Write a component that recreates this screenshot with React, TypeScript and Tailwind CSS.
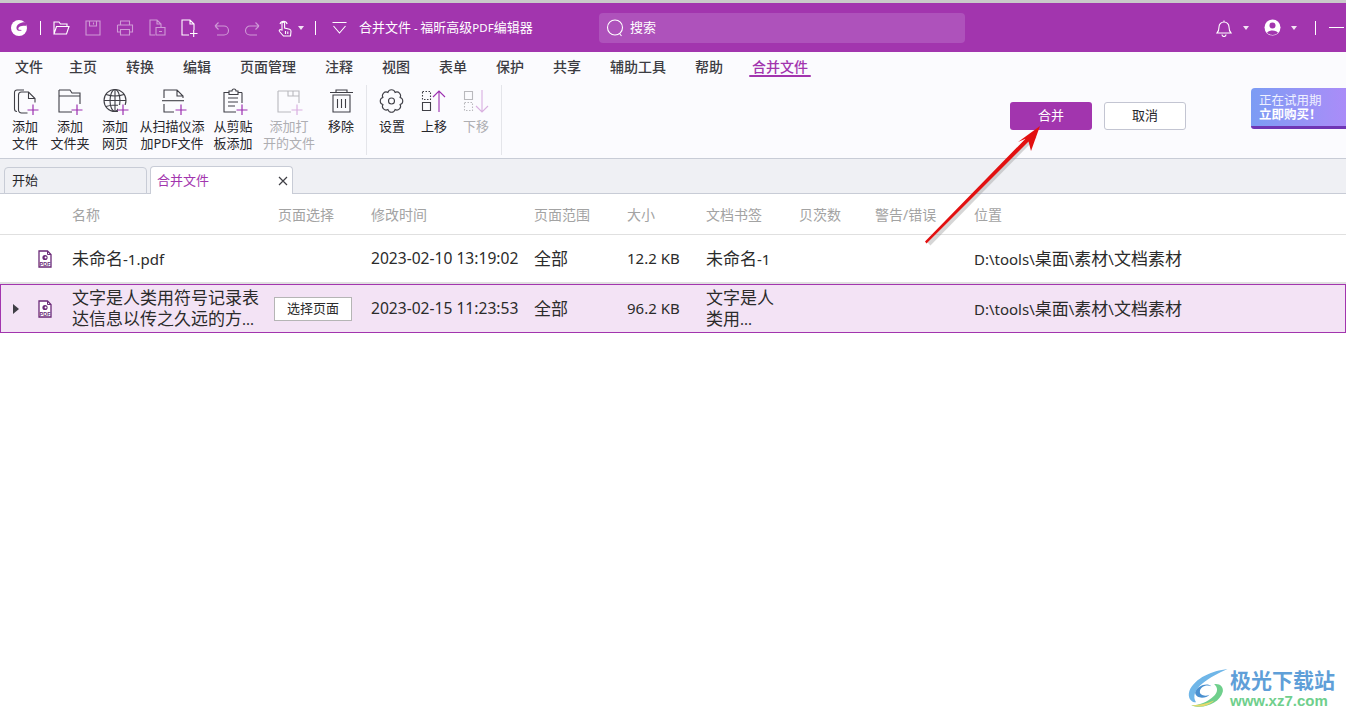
import type { ReactNode } from 'react';

const FONT = 'font-["Noto_Sans","Noto_Sans_CJK_SC",sans-serif]';

function Plus({ x, y, color = '#9c2fb0' }: { x: number; y: number; color?: string }) {
  return <path d={`M${x - 5.5} ${y}h11M${x} ${y - 5.5}v11`} stroke={color} strokeWidth="1.2" fill="none" />;
}

function RibbonSvg({ children }: { children: ReactNode }) {
  return (
    <svg width="32" height="30" viewBox="0 0 32 30" fill="none" stroke="#3f3f46" strokeWidth="1.1">
      {children}
    </svg>
  );
}

// scalloped gear outline, 8 lobes
function gearPath(cx: number, cy: number, r: number, lobe: number) {
  let d = '';
  for (let i = 0; i <= 8; i++) {
    const a = ((i * 45 + 22.5) * Math.PI) / 180;
    const x = (cx + r * Math.cos(a)).toFixed(2);
    const y = (cy + r * Math.sin(a)).toFixed(2);
    d += i === 0 ? `M${x} ${y}` : `A${lobe} ${lobe} 0 0 1 ${x} ${y}`;
  }
  return d + 'z';
}

const AddFile = () => (
  <RibbonSvg>
    <path d="M15 5H8a2.500 2.500 0 0 0-2.500 2.500V24A2.500 2.500 0 0 0 8 26.500" />
    <path d="M9.500 10a3 3 0 0 1 3-3h7l6.500 6.500v4M9.500 10v15a3 3 0 0 0 3 3h6" />
    <path d="M19.500 7v6.500H26" />
    <Plus x={24} y={25} />
  </RibbonSvg>
);
const AddFolder = () => (
  <RibbonSvg>
    <path d="M5 5h11l2 3h8v11M5 5v22h13M5 11h21" />
    <Plus x={23} y={25} />
  </RibbonSvg>
);
const AddWeb = () => (
  <RibbonSvg>
    <circle cx="16" cy="15.500" r="11" />
    <ellipse cx="16" cy="15.500" rx="5" ry="11" />
    <path d="M5 15.500h22M7 9.500q9 3 18 0M7 21.500q9-3 18 0M16 4.500v22" />
    <path d="M19 20h10v10H19z" fill="#fbfbfe" stroke="none" />
    <Plus x={24} y={25} />
  </RibbonSvg>
);
const AddScan = () => (
  <RibbonSvg>
    <path d="M8 13V5h13l6 6v2M21 5v6h6" />
    <path d="M6 15.700h22" />
    <path d="M8 19v8h10" />
    <Plus x={25} y={25} />
  </RibbonSvg>
);
const AddClip = () => (
  <RibbonSvg>
    <path d="M12 7.500H7V27h12M25 7.500h-4M25 7.500V18" />
    <path d="M12 9.500V6h3a2 2 0 0 1 4 0h2v3.500z" />
    <path d="M11 13h10M11 17h10M11 21h7" />
    <Plus x={25} y={25} />
  </RibbonSvg>
);
const AddOpen = () => (
  <svg width="32" height="30" viewBox="0 0 32 30" fill="none" stroke="#b9b9bd" strokeWidth="1.1">
    <path d="M5 6h21v12M5 6v21h13M15 6v5h11M20 6v5" />
    <Plus x={24} y={25} color="#d9b0e0" />
  </svg>
);
const Trash = () => (
  <RibbonSvg>
    <path d="M5 7.500h23M11 7V5h11v2" />
    <path d="M8 10h17v17H8z" />
    <path d="M12.500 14v9M16.500 14v9M20.500 14v9" />
  </RibbonSvg>
);
const Gear = () => (
  <RibbonSvg>
    <path d={gearPath(15.5, 16, 9.3, 3.7)} />
    <circle cx="15.500" cy="16" r="3" />
  </RibbonSvg>
);
const MoveUp = () => (
  <svg width="32" height="30" viewBox="0 0 32 30" fill="none" strokeWidth="1.1">
    <path d="M4.500 6.500h8v8h-8z" stroke="#3f3f46" strokeDasharray="1.500 1.500" />
    <path d="M4.500 17.500h8v8h-8z" stroke="#3f3f46" />
    <path d="M21 27V6M15 12l6-6 6 6" stroke="#9c2fb0" />
  </svg>
);
const MoveDown = () => (
  <svg width="32" height="30" viewBox="0 0 32 30" fill="none" strokeWidth="1.1">
    <path d="M4.500 6.500h8v8h-8z" stroke="#b9b9bd" />
    <path d="M4.500 17.500h8v8h-8z" stroke="#b9b9bd" strokeDasharray="1.500 1.500" />
    <path d="M22 5v22M16 21l6 6 6-6" stroke="#d9b0e0" />
  </svg>
);

const ribbonLeft = [
  { w: 'w-[44px]', icon: <AddFile />, lines: ['添加', '文件'] },
  { w: 'w-[46px]', icon: <AddFolder />, lines: ['添加', '文件夹'] },
  { w: 'w-[44px]', icon: <AddWeb />, lines: ['添加', '网页'] },
  { w: 'w-[70px]', icon: <AddScan />, lines: ['从扫描仪添', '加PDF文件'] },
  { w: 'w-[52px]', icon: <AddClip />, lines: ['从剪贴', '板添加'] },
  { w: 'w-[60px]', icon: <AddOpen />, lines: ['添加打', '开的文件'], off: true },
  { w: 'w-[44px]', icon: <Trash />, lines: ['移除'] },
];
const ribbonRight = [
  { w: 'w-[46px]', icon: <Gear />, lines: ['设置'] },
  { w: 'w-[38px]', icon: <MoveUp />, lines: ['上移'] },
  { w: 'w-[46px]', icon: <MoveDown />, lines: ['下移'], off: true },
];

function RibbonItem({ w, icon, lines, off }: { w: string; icon: ReactNode; lines: string[]; off?: boolean }) {
  return (
    <div className={`${w} flex flex-col items-center`}>
      <div className="h-[30px] flex justify-center">{icon}</div>
      <div className={`mt-[3px] text-[13px] leading-[17px] text-center whitespace-nowrap ${off ? 'text-[#aeaeb2]' : 'text-[#26262b]'}`}>
        {lines.map((l) => (
          <div key={l}>{l}</div>
        ))}
      </div>
    </div>
  );
}

function TopIcon({ children, dim }: { children: ReactNode; dim?: boolean }) {
  return (
    <div className="w-8 h-[30px] flex items-center justify-center">
      <svg width="18" height="18" viewBox="0 0 18 18" fill="none" stroke={dim ? '#cf9ad6' : '#ffffff'} strokeWidth="1.1">
        {children}
      </svg>
    </div>
  );
}

function Caret() {
  return <div className="w-0 h-0 border-x-[3.5px] border-x-transparent border-t-[4px] border-t-[#f2e3f4]" />;
}

function PdfIcon() {
  return (
    <svg width="14" height="18" viewBox="0 0 14 18" fill="none">
      <path d="M1 1h8.500L13 4.500V17H1z" stroke="#6b2a78" strokeWidth="1.300" fill="#fff" />
      <path d="M9.500 1v3.500H13" stroke="#6b2a78" strokeWidth="1" />
      <circle cx="7" cy="7.500" r="2.600" fill="#6b2a78" />
      <circle cx="7.600" cy="7.500" r="1" fill="#fff" />
      <text x="7" y="15.500" textAnchor="middle" fontSize="5.500" fontWeight="700" fill="#6b2a78" fontFamily="Liberation Sans">PDF</text>
    </svg>
  );
}

// the reference sets Latin smaller than CJK in table rows
function Mix({ t }: { t: string }) {
  return (
    <>
      {t.split(/([\x00-\x7f]+)/).map((s, i) =>
        i % 2 ? (
          <span key={i} className="text-[15px]">{s}</span>
        ) : (
          <span key={i}>{s}</span>
        ),
      )}
    </>
  );
}

const headers = [
  ['w-[206px]', '名称'],
  ['w-[93px]', '页面选择'],
  ['w-[163px]', '修改时间'],
  ['w-[93px]', '页面范围'],
  ['w-[79px]', '大小'],
  ['w-[93px]', '文档书签'],
  ['w-[76px]', '贝茨数'],
  ['w-[99px]', '警告/错误'],
  ['', '位置'],
];

export default function App() {
  return (
    <div className={`relative w-[1346px] h-[718px] overflow-hidden bg-white ${FONT}`}>
      <div className="h-[3px] bg-[#c9c9c9]" />
      {/* title bar */}
      <div className="h-[49px] bg-[#a235ae] flex items-center pl-[3px] text-white">
        <div className="w-8 flex justify-center">
          <svg width="18" height="18" viewBox="0 0 18 18">
            <circle cx="9" cy="9" r="8" fill="#fff" />
            <path d="M16.500 3.500C12 2.500 6 5 6.500 9.500c.3 2.500 3.500 3 5.500 1.500l-3-.2c-1-.6-.8-2.200.5-3 2-1.200 5-1.300 7-1z" fill="#a235ae" />
          </svg>
        </div>
        <div className="w-[10px] flex justify-center"><div className="w-px h-[14px] bg-white" /></div>
        <TopIcon>
          <path d="M2 15V3h5l1.500 2H15v2.500M2 15h12.500L17 7.500H4.500z" />
        </TopIcon>
        <TopIcon dim>
          <path d="M2 2h14v14H2zM5.500 2v5h7V2M9.500 3.500v2" />
        </TopIcon>
        <TopIcon dim>
          <path d="M4.500 6V2h9v4M1.500 6h15v7h-3M4.500 13h-3V6M4.500 10.500h9V16h-9z" />
        </TopIcon>
        <TopIcon dim>
          <path d="M7 16H2V1h7l4 4v3M9 1v4h4M8 8.500h9V16H8zM11 12.500h3" />
        </TopIcon>
        <TopIcon>
          <path d="M9 16H2V1h8l4 4v6M10 1v4h4M10 14.500h7.500M13.700 11v7" />
        </TopIcon>
        <TopIcon dim>
          <path d="M3 7h9a4.500 4.500 0 0 1 0 9H5M3 7l3.500-3.500M3 7l3.500 3.500" />
        </TopIcon>
        <TopIcon dim>
          <path d="M15 7H6a4.500 4.500 0 0 0 0 9h7M15 7l-3.500-3.500M15 7l-3.500 3.500" />
        </TopIcon>
        <TopIcon>
          <path d="M6 11V4.500a1.300 1.300 0 0 1 2.600 0V9l5 1.200c1 .3 1.400 1 1.400 2L14.500 17h-7L3.500 12.500c-.8-1 .2-2.300 1.400-1.700zM4 5a3.800 3.800 0 0 1 7.200 0M9.500 12v3M11.800 12.500v2.500" />
        </TopIcon>
        <div className="-ml-[3px] w-[6px] flex justify-center"><Caret /></div>
        <div className="ml-[11px] w-px h-[14px] bg-white" />
        <div className="ml-[16px] w-[15px]">
          <svg width="15" height="14" viewBox="0 0 15 14" fill="none" stroke="#fff" strokeWidth="1.100">
            <path d="M0.500 1.500h14M1.500 5l6 7 6-7" />
          </svg>
        </div>
        <div className="ml-[12px] w-[240px] text-[13px] whitespace-nowrap">
          合并文件<span className="text-[11px]"> - </span>福昕高级<span className="text-[11.5px]">PDF</span>编辑器
        </div>
        <div className="w-[366px] h-[30px] rounded-[4px] bg-[#ae52bb] flex items-center pl-[7px] gap-[6px] text-[13px]">
          <svg width="18" height="20" viewBox="0 0 18 20" fill="none" stroke="#fff" strokeWidth="1.100">
            <circle cx="9" cy="9.500" r="7.500" />
            <path d="M13.500 15.500l2 2.500" />
          </svg>
          <span>搜索</span>
        </div>
        <div className="ml-[251px] flex items-center shrink-0">
          <svg width="16" height="18" viewBox="0 0 16 18" fill="none" stroke="#fff" strokeWidth="1.100">
            <path d="M1 14c1.500-1.500 2-2.500 2-6a5 5 0 0 1 10 0c0 3.500.5 4.500 2 6zM6 15.500a2 2 0 0 0 4 0M8 1.500V3" />
          </svg>
          <div className="ml-[11px]"><Caret /></div>
          <svg className="ml-[15px]" width="17" height="17" viewBox="0 0 17 17">
            <circle cx="8.500" cy="8.500" r="8" fill="#fff" />
            <circle cx="8.500" cy="6.500" r="3" fill="#a235ae" />
            <path d="M3 14c1-3.500 10-3.500 11 0-3 2.500-8 2.500-11 0z" fill="#a235ae" />
          </svg>
          <div className="ml-[10px]"><Caret /></div>
          <div className="ml-[18px] w-px h-[14px] bg-white" />
          <div className="ml-[13px] w-[15px] h-px bg-white" />
        </div>
      </div>

      {/* ribbon */}
      <div className="h-[107px] bg-[#fbfbfe] border-b border-[#c8ccd6]">
        <div className="h-[28px] flex items-center pl-[15px] text-[14px] font-medium text-[#3c3c42] whitespace-nowrap">
          <span>文件</span>
          <span className="ml-[26px]">主页</span>
          <div className="ml-[29px] flex gap-[29px]">
            {['转换', '编辑', '页面管理', '注释', '视图', '表单', '保护', '共享', '辅助工具', '帮助'].map((t) => (
              <span key={t}>{t}</span>
            ))}
            <span className="relative text-[#a235ae]">
              合并文件
              <span className="absolute -left-[3px] -right-[3px] top-[19px] h-[2px] rounded bg-[#a235ae]" />
            </span>
          </div>
        </div>
        <div className="flex items-start pl-[3px] pt-[5px]">
          {ribbonLeft.map((r) => (
            <RibbonItem key={r.lines[0] + r.w} {...r} />
          ))}
          <div className="ml-[3px] mr-[2px] w-px h-[70px] bg-[#e4e5ea]" />
          {ribbonRight.map((r) => (
            <RibbonItem key={r.lines[0]} {...r} />
          ))}
          <div className="ml-[2px] w-px h-[70px] bg-[#e4e5ea]" />
          <div className="ml-[508px] mt-[17px] w-[82px] h-[28px] rounded-[3px] bg-[#a235ae] text-white text-[13px] flex items-center justify-center">合并</div>
          <div className="ml-[12px] mt-[17px] w-[82px] h-[28px] rounded-[3px] bg-white border border-[#c3c5d2] text-[#26262b] text-[13px] flex items-center justify-center">取消</div>
          <div className="ml-[65px] mt-[3px] w-[95px] h-[41px] rounded-tl-[4px] rounded-bl-[3px] bg-gradient-to-r from-[#7b9cf4] to-[#aa8cf8] border-b-[3px] border-[#6f35b5] pl-[8px] pt-[6px] text-[12.5px] leading-[14px] text-[#eef0ff]">
            <div>正在试用期</div>
            <div className="font-bold text-white">立即购买！</div>
          </div>
        </div>
      </div>

      {/* tabs */}
      <div className="h-[35px] bg-[#eff0f4] border-b border-[#c8ccd6] flex items-end pl-[4px] gap-[3px]">
        <div className="w-[143px] h-[27px] -mb-px rounded-t-[4px] border border-[#c8ccd6] bg-[#eff0f4] text-[13px] text-[#26262b] pl-[7px] flex items-center">开始</div>
        <div className="w-[143px] h-[28px] -mb-px rounded-t-[4px] border border-b-0 border-[#c8ccd6] bg-white text-[13px] text-[#a235ae] pl-[6px] pr-[4px] flex items-center justify-between">
          合并文件
          <svg width="10" height="10" viewBox="0 0 10 10" stroke="#3f3f46" strokeWidth="1.200"><path d="M1 1l8 8M9 1l-8 8" /></svg>
        </div>
      </div>

      {/* file table */}
      <div className="h-[41px] flex items-center pl-[72px] border-b border-[#e0e0e0] text-[14px] text-[#a3a3a3] whitespace-nowrap">
        {headers.map(([w, t]) => (
          <div key={t} className={w}>{t}</div>
        ))}
      </div>
      <div className="h-[49px] flex items-center border-b-2 border-[#e0e0e0] text-[17px] text-[#2b2b2b] whitespace-nowrap">
        <div className="w-[72px] pl-[38px] flex"><PdfIcon /></div>
        <div className="w-[299px]"><Mix t="未命名-1.pdf" /></div>
        <div className="w-[163px] text-[15.6px]">2023-02-10 13:19:02</div>
        <div className="w-[93px]">全部</div>
        <div className="w-[79px] text-[15px]">12.2 KB</div>
        <div className="w-[268px]"><Mix t="未命名-1" /></div>
        <div><Mix t="D:\tools\桌面\素材\文档素材" /></div>
      </div>
      <div className="h-[49px] flex items-center bg-[#f3e3f5] ring-1 ring-inset ring-[#a235ae] text-[17px] text-[#2b2b2b] whitespace-nowrap">
        <div className="w-[72px] pl-[13px] flex items-center">
          <div className="w-0 h-0 border-y-[5px] border-y-transparent border-l-[6px] border-l-[#3f3f46]" />
          <div className="ml-[19px] flex"><PdfIcon /></div>
        </div>
        <div className="w-[202px] leading-[21px]">
          <div>文字是人类用符号记录表</div>
          <div><Mix t="达信息以传之久远的方..." /></div>
        </div>
        <div className="w-[97px]">
          <div className="w-[78px] h-[24px] bg-white border border-[#b5b5b5] text-[13px] flex items-center justify-center">选择页面</div>
        </div>
        <div className="w-[163px] text-[15.6px]">2023-02-15 11:23:53</div>
        <div className="w-[93px]">全部</div>
        <div className="w-[79px] text-[15px]">96.2 KB</div>
        <div className="w-[268px] leading-[21px]">
          <div>文字是人</div>
          <div><Mix t="类用..." /></div>
        </div>
        <div><Mix t="D:\tools\桌面\素材\文档素材" /></div>
      </div>

      {/* red annotation arrow */}
      <svg className="absolute left-[915px] top-[115px]" width="140" height="140" viewBox="915 115 140 140">
        <path d="M929 244l106-108" stroke="#9a9a9a" strokeWidth="4" opacity="0.4" />
        <path d="M925 241.500l100.500-102.800-7.500 3.300 22-16-9 25-2.500-9.500-102 102z" fill="#e21010" />
      </svg>

      {/* watermark */}
      <div className="absolute left-[1186px] top-[668px] flex items-center">
        <svg width="43" height="42" viewBox="0 0 42 44" fill="none">
          <path d="M42 1C26 3 8 10 2 24c-2 6 1 12 7 12C5 30 8 22 16 16 23 10 33 5 42 1z" fill="#6fb6e8" />
          <path d="M8 26c2-8 13-11 17-7-6-2-12 1-12 6 0 4 6 5 10 3-3 4-14 5-15-2z" fill="#4a90d0" />
          <path d="M4 39c12 5 30-2 33-14 1-5-3-9-9-8 4 3 4 8 0 12-7 7-16 10-24 10z" fill="#6fcf8c" />
          <path d="M4 39c8 3 18 1 24-5-7 3-16 5-24 5z" fill="#e6d96a" />
        </svg>
        <div className="ml-[1px] whitespace-nowrap font-bold">
          <div className="text-[21px] leading-[24px] text-[#5f9fd8]">极光下载站</div>
          <div className="text-[15px] leading-[18px] text-[#6fcf8c] font-['Liberation_Sans',sans-serif]">www.xz7.com</div>
        </div>
      </div>
    </div>
  );
}
